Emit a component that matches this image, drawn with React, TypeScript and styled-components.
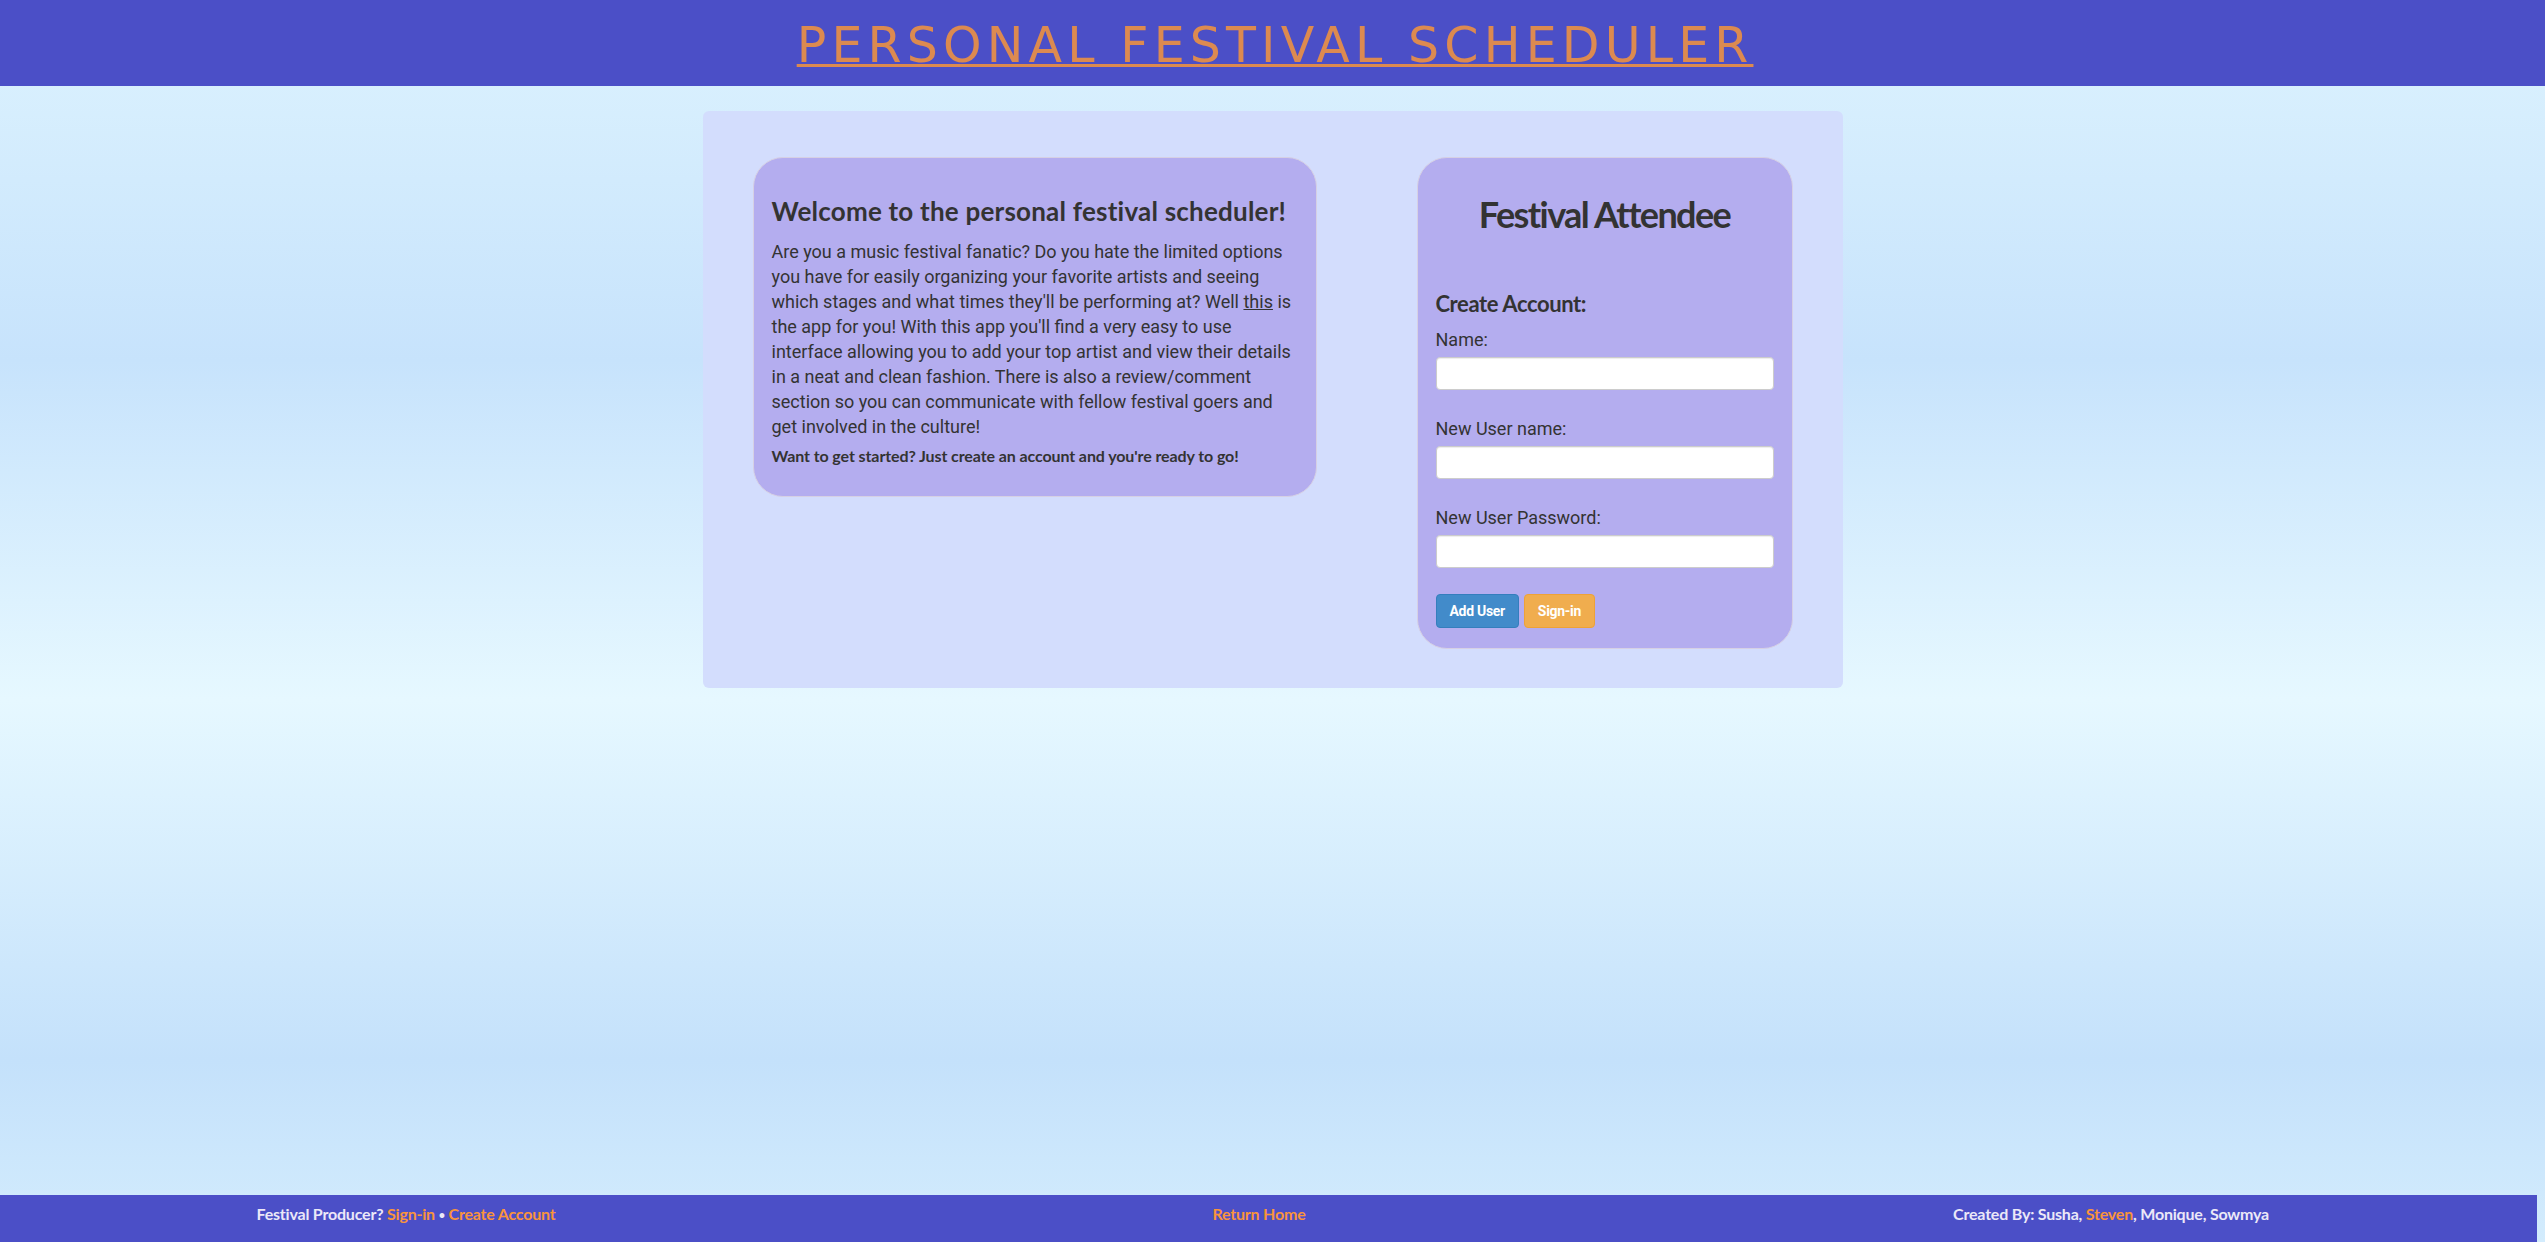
import React from "react";
import styled, { createGlobalStyle } from "styled-components";

const GlobalStyle = createGlobalStyle`
  html, body {
    margin: 0;
    padding: 0;
  }
  body {
    font-family: Roboto, "Liberation Sans", sans-serif;
    color: #333;
  }
  * { box-sizing: border-box; }
`;

const Page = styled.div`
  min-height: 100vh;
  display: flex;
  flex-direction: column;
  background: linear-gradient(
    to bottom,
    #ddf3fe 0px,
    #c7e3fc 360px,
    #e6f8ff 700px,
    #c4e1fb 1060px,
    #d3ecfd 1242px
  );
`;

const Header = styled.header`
  height: 86px;
  padding-top: 4px;
  background: #4b4fc7;
  display: flex;
  align-items: center;
  justify-content: center;
`;

const Title = styled.a`
  font-family: "DejaVu Sans", "Open Sans", sans-serif;
  font-weight: 400;
  font-size: 49px;
  line-height: 57px;
  letter-spacing: 5.15px;
  margin-right: -5.15px;
  color: #dc8a50;
  text-decoration: underline;
  text-decoration-thickness: 3px;
  text-underline-offset: 2px;
  cursor: pointer;
`;

const Panel = styled.main`
  width: 1140px;
  margin: 25px auto 0;
  padding: 46px 50px 39px;
  background: #d3ddfd;
  border-radius: 6px;
  display: flex;
  align-items: flex-start;
  justify-content: space-between;
`;

const Card = styled.section<{ $width: number }>`
  width: ${(p) => p.$width}px;
  background: #b4adef;
  border: 1px solid #d6d0e4;
  border-radius: 30px;
  padding: 18px;
  display: flex;
  flex-direction: column;
`;

const Heading = styled.h3`
  font-family: Lato, "Open Sans", sans-serif;
  font-weight: 700;
  font-size: 26px;
  line-height: 28px;
  letter-spacing: 0.22px;
  color: #333;
  margin: 21px 0 0;
`;

const Body = styled.p`
  font-family: Roboto, "Liberation Sans", sans-serif;
  font-size: 18px;
  line-height: 25px;
  color: #333;
  margin: 14px 0 0;
`;

const Underlined = styled.span`
  text-decoration: underline;
`;

const Emphasis = styled.p`
  font-family: Lato, "Open Sans", sans-serif;
  font-weight: 700;
  font-size: 16px;
  line-height: 20px;
  letter-spacing: -0.1px;
  color: #333;
  margin: 7px 0 12px;
`;

const CardTitle = styled.h1`
  font-family: Lato, "Open Sans", sans-serif;
  font-weight: 700;
  font-size: 36px;
  line-height: 40px;
  letter-spacing: -1.6px;
  text-align: center;
  color: #333;
  margin: 18px 0 0;
`;

const FormTitle = styled.h4`
  font-family: Lato, "Open Sans", sans-serif;
  font-weight: 700;
  font-size: 22px;
  line-height: 26px;
  letter-spacing: -0.4px;
  color: #333;
  margin: 57px 0 13px;
`;

const Field = styled.div`
  display: flex;
  flex-direction: column;
  & + & {
    margin-top: 29px;
  }
`;

const Label = styled.label`
  font-family: Roboto, "Liberation Sans", sans-serif;
  font-size: 18px;
  line-height: 20px;
  color: #333;
  margin-bottom: 7px;
`;

const Input = styled.input`
  height: 33px;
  width: 100%;
  border: 1px solid #ccc;
  border-radius: 4px;
  background: #fff;
  box-shadow: inset 0 1px 1px rgba(0, 0, 0, 0.075);
  padding: 4px 10px;
  font-size: 14px;
  outline: none;
`;

const Actions = styled.div`
  display: flex;
  gap: 5px;
  margin: 26px 0 2px;
`;

const Button = styled.button<{ $variant: "primary" | "warning" }>`
  height: 34px;
  padding: 0 13px;
  border-radius: 4px;
  border: 1px solid ${(p) => (p.$variant === "primary" ? "#357ebd" : "#eea236")};
  background: ${(p) => (p.$variant === "primary" ? "#428bca" : "#f0ad4e")};
  color: #fff;
  font-family: Roboto, "Liberation Sans", sans-serif;
  font-weight: 700;
  font-size: 14px;
  letter-spacing: -0.3px;
  cursor: pointer;
`;

const Footer = styled.footer`
  margin-top: auto;
  margin-right: 8px;
  height: 47px;
  padding-top: 9px;
  background: #4b4fc7;
  display: grid;
  grid-template-columns: 812px 894px 810px;
  font-family: Lato, "Open Sans", sans-serif;
  font-weight: 700;
  font-size: 16px;
  line-height: 20px;
  letter-spacing: -0.2px;
  color: #ebe8f8;
`;

const FooterCell = styled.div`
  text-align: center;
  white-space: nowrap;
`;

const FooterLink = styled.a`
  color: #f9943b;
  text-decoration: none;
  cursor: pointer;
`;

const Bullet = styled.span`
  font-size: 11px;
  vertical-align: 1px;
`;

export default function App() {
  return (
    <>
      <GlobalStyle />
      <Page>
        <Header>
          <Title>PERSONAL FESTIVAL SCHEDULER</Title>
        </Header>
        <Panel>
          <Card $width={564}>
            <Heading>Welcome to the personal festival scheduler!</Heading>
            <Body>
              Are you a music festival fanatic? Do you hate the limited options
              <br />
              you have for easily organizing your favorite artists and seeing
              <br />
              which stages and what times they'll be performing at? Well{" "}
              <Underlined>this</Underlined> is
              <br />
              the app for you! With this app you'll find a very easy to use
              <br />
              interface allowing you to add your top artist and view their details
              <br />
              in a neat and clean fashion. There is also a review/comment
              <br />
              section so you can communicate with fellow festival goers and
              <br />
              get involved in the culture!
            </Body>
            <Emphasis>
              Want to get started? Just create an account and you're ready to go!
            </Emphasis>
          </Card>
          <Card $width={376}>
            <CardTitle>Festival Attendee</CardTitle>
            <FormTitle>Create Account:</FormTitle>
            <Field>
              <Label>Name:</Label>
              <Input type="text" />
            </Field>
            <Field>
              <Label>New User name:</Label>
              <Input type="text" />
            </Field>
            <Field>
              <Label>New User Password:</Label>
              <Input type="password" />
            </Field>
            <Actions>
              <Button $variant="primary">Add User</Button>
              <Button $variant="warning">Sign-in</Button>
            </Actions>
          </Card>
        </Panel>
        <Footer>
          <FooterCell>
            Festival Producer? <FooterLink>Sign-in</FooterLink> <Bullet>•</Bullet>{" "}
            <FooterLink>Create Account</FooterLink>
          </FooterCell>
          <FooterCell>
            <FooterLink>Return Home</FooterLink>
          </FooterCell>
          <FooterCell>
            Created By: Susha, <FooterLink>Steven</FooterLink>, Monique, Sowmya
          </FooterCell>
        </Footer>
      </Page>
    </>
  );
}
